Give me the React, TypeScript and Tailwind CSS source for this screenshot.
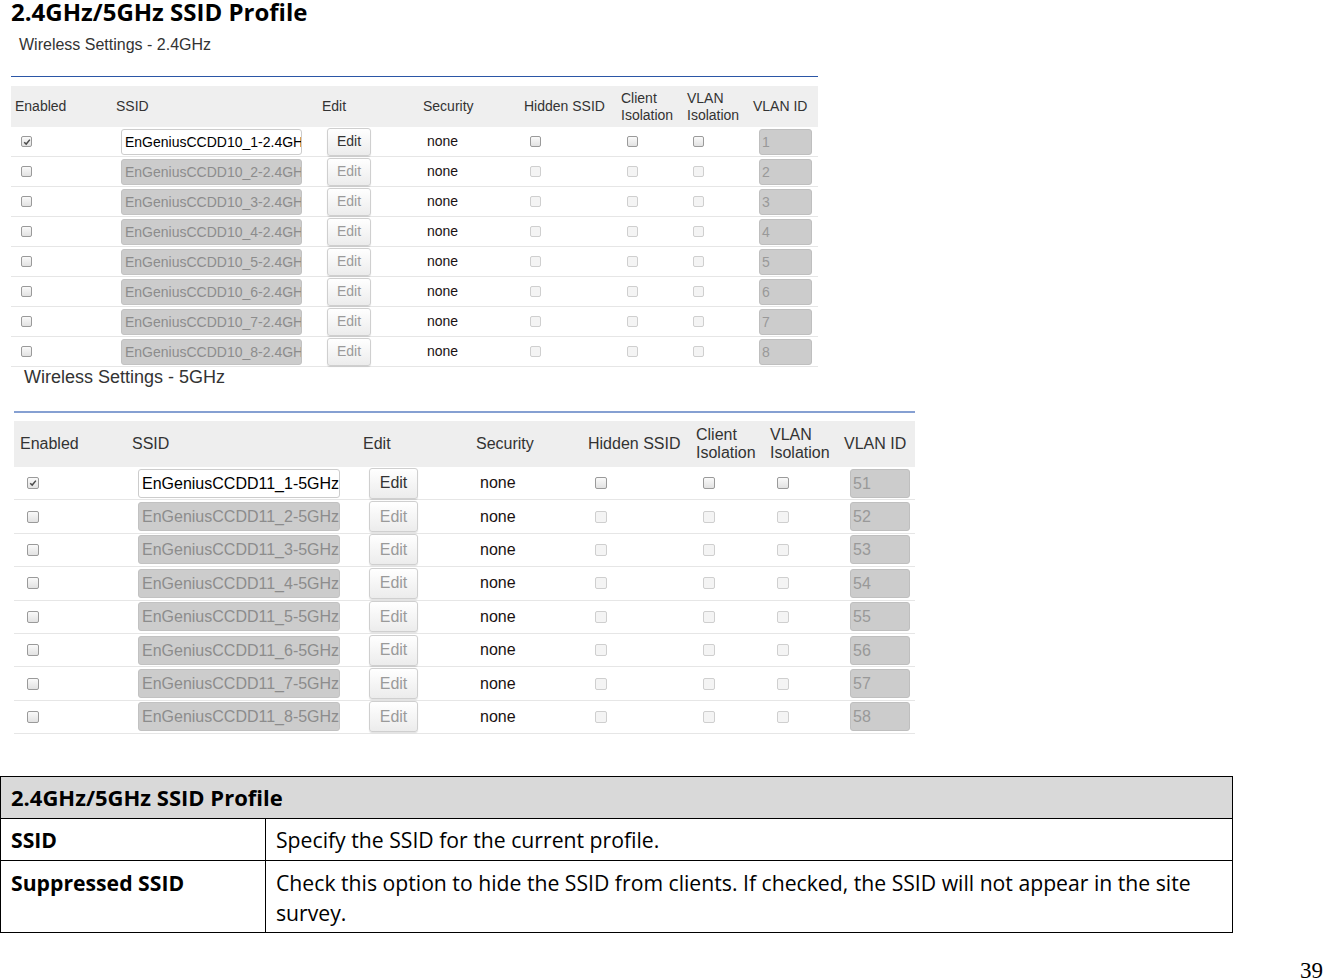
import React from 'react'

type Cfg = {
  wrap: string
  title: string
  line: string
  gap: string
  head: string
  row: string
  cols: string[]
  headPad: string[]
  cellPad: string[]
  cb: string
  input: string
  btn: string
  vlan: string
  prefix: string
  ids: number[]
  band: string
}

const small: Cfg = {
  wrap: 'ml-[11px] w-[807px]',
  title: 'pl-[8px] mt-[10px] text-[16px] leading-[18px] h-[18px]',
  line: 'mt-[22px] h-px bg-[#2b56a6]',
  gap: 'h-[9px]',
  head: 'h-[41px] bg-[#efefef] text-[14px] leading-[17px]',
  row: 'h-[30px] text-[14px]',
  cols: ['w-[100px]', 'w-[206px]', 'w-[96px]', 'w-[101px]', 'w-[102px]', 'w-[66px]', 'w-[66px]', 'w-[70px]'],
  headPad: ['pl-[4px]', 'pl-[5px]', 'pl-[5px]', 'pl-[10px]', 'pl-[10px]', 'pl-[5px]', 'pl-[5px]', 'pl-[5px]'],
  cellPad: ['pl-[10px]', 'pl-[10px]', 'pl-[10px]', 'pl-[14px]', 'pl-[16px]', 'pl-[11px]', 'pl-[11px]', 'pl-[11px]'],
  cb: 'size-[11px]',
  input: 'w-[181px] h-[26px] pl-[3px] text-[14px] leading-[24px]',
  btn: 'w-[44px] h-[28px] text-[14px]',
  vlan: 'w-[53px] h-[26px] pl-[2px] text-[14px] leading-[24px]',
  prefix: 'EnGeniusCCDD10_',
  ids: [1, 2, 3, 4, 5, 6, 7, 8],
  band: '2.4GHz',
}

const large: Cfg = {
  wrap: 'ml-[14px] w-[901px]',
  title: 'pl-[10px] text-[18px] leading-[20px] h-[20px]',
  line: 'mt-[24px] h-[2px] bg-[#86a0d2]',
  gap: 'h-[8px]',
  head: 'h-[46px] bg-[#eeeeee] text-[16px] leading-[18px]',
  row: 'h-[33.4px] text-[16px]',
  cols: ['w-[112px]', 'w-[230px]', 'w-[107px]', 'w-[113px]', 'w-[114px]', 'w-[74px]', 'w-[73px]', 'w-[78px]'],
  headPad: ['pl-[6px]', 'pl-[6px]', 'pl-[7px]', 'pl-[13px]', 'pl-[12px]', 'pl-[6px]', 'pl-[6px]', 'pl-[7px]'],
  cellPad: ['pl-[13px]', 'pl-[12px]', 'pl-[13px]', 'pl-[17px]', 'pl-[19px]', 'pl-[13px]', 'pl-[13px]', 'pl-[13px]'],
  cb: 'size-[12px]',
  input: 'w-[202px] h-[29px] pl-[3px] text-[16px] leading-[27px]',
  btn: 'w-[49px] h-[31px] text-[16px]',
  vlan: 'w-[60px] h-[29px] pl-[2px] text-[16px] leading-[27px]',
  prefix: 'EnGeniusCCDD11_',
  ids: [51, 52, 53, 54, 55, 56, 57, 58],
  band: '5GHz',
}

function Check({ cfg, on, checked }: { cfg: Cfg; on: boolean; checked?: boolean }) {
  return (
    <div
      className={`${cfg.cb} rounded-[2px] border flex items-center justify-center ${
        on ? 'border-[#9a9a9a] bg-gradient-to-b from-[#fafafa] to-[#e2e2e2]' : 'border-[#cfcfcf] bg-[#f4f4f4]'
      }`}
    >
      {checked && (
        <svg viewBox="0 0 10 10" className="size-[8px]">
          <path d="M1.5 5.2 L4 7.6 L8.6 2" fill="none" stroke="#4a4a4a" strokeWidth="1.8" />
        </svg>
      )}
    </div>
  )
}

const headers: React.ReactNode[] = [
  'Enabled',
  'SSID',
  'Edit',
  'Security',
  'Hidden SSID',
  <>Client<br />Isolation</>,
  <>VLAN<br />Isolation</>,
  'VLAN ID',
]

function SsidTable({ cfg, title }: { cfg: Cfg; title: string }) {
  return (
    <div className={`${cfg.wrap} text-[#222] font-['Liberation_Sans',Arial,sans-serif]`}>
      <div className={`${cfg.title} text-[#333]`}>{title}</div>
      <div className={cfg.line} />
      <div className={cfg.gap} />
      <div className={`flex items-center ${cfg.head} text-[#333]`}>
        {headers.map((h, i) => (
          <div key={i} className={`${cfg.cols[i]} ${cfg.headPad[i]} shrink-0`}>
            {h}
          </div>
        ))}
      </div>
      {cfg.ids.map((id, r) => {
        const on = r === 0
        return (
          <div key={id} className={`flex items-center border-b border-[#e6e6e6] ${cfg.row}`}>
            <div className={`${cfg.cols[0]} ${cfg.cellPad[0]} shrink-0`}>
              <Check cfg={cfg} on checked={on} />
            </div>
            <div className={`${cfg.cols[1]} ${cfg.cellPad[1]} shrink-0`}>
              <div
                className={`${cfg.input} rounded-[3px] border overflow-hidden whitespace-nowrap ${
                  on ? 'bg-white border-[#cccccc] text-black' : 'bg-[#cccccc] border-[#c2c2c2] text-[#8c8c8c]'
                }`}
              >
                {`${cfg.prefix}${r + 1}-${cfg.band}`}
              </div>
            </div>
            <div className={`${cfg.cols[2]} ${cfg.cellPad[2]} shrink-0`}>
              <div
                className={`${cfg.btn} rounded-[3px] border border-[#cfcfcf] bg-gradient-to-b from-white to-[#ececec] shadow-[0_1px_1px_rgba(0,0,0,0.12)] flex items-center justify-center ${
                  on ? 'text-[#333]' : 'text-[#9a9a9a]'
                }`}
              >
                Edit
              </div>
            </div>
            <div className={`${cfg.cols[3]} ${cfg.cellPad[3]} shrink-0 text-[#1a1111]`}>none</div>
            <div className={`${cfg.cols[4]} ${cfg.cellPad[4]} shrink-0`}>
              <Check cfg={cfg} on={on} />
            </div>
            <div className={`${cfg.cols[5]} ${cfg.cellPad[5]} shrink-0`}>
              <Check cfg={cfg} on={on} />
            </div>
            <div className={`${cfg.cols[6]} ${cfg.cellPad[6]} shrink-0`}>
              <Check cfg={cfg} on={on} />
            </div>
            <div className={`${cfg.cols[7]} ${cfg.cellPad[7]} shrink-0`}>
              <div className={`${cfg.vlan} rounded-[3px] border border-[#bfbfbf] bg-[#cccccc] text-[#999]`}>{id}</div>
            </div>
          </div>
        )
      })}
    </div>
  )
}

export default function App() {
  return (
    <div className="w-[1323px] h-[980px] bg-white overflow-hidden text-black">
      <h1 className="pl-[11px] h-[26px] pt-[2px] text-[24px] leading-[20px] font-bold font-['Open_Sans','Noto_Sans',sans-serif]">
        2.4GHz/5GHz SSID Profile
      </h1>
      <SsidTable cfg={small} title="Wireless Settings - 2.4GHz" />
      <SsidTable cfg={large} title="Wireless Settings - 5GHz" />

      <div className="mt-[42px] w-[1233px] border border-black font-['Open_Sans','Noto_Sans',sans-serif] text-[21.2px]">
        <div className="h-[42px] bg-[#d9d9d9] border-b border-black pl-[10px] flex items-center font-bold text-[22px]">
          2.4GHz/5GHz SSID Profile
        </div>
        <div className="grid grid-cols-[265px_1fr] border-b border-black">
          <div className="h-[41px] pl-[10px] flex items-center font-bold border-r border-black">SSID</div>
          <div className="pl-[10px] flex items-center">Specify the SSID for the current profile.</div>
        </div>
        <div className="grid grid-cols-[265px_1fr]">
          <div className="pl-[10px] pt-[7px] font-bold border-r border-black leading-[30px]">Suppressed SSID</div>
          <div className="pl-[10px] pt-[7px] pb-[4px] pr-[20px] leading-[30px]">
            Check this option to hide the SSID from clients. If checked, the SSID will not appear in the site survey.
          </div>
        </div>
      </div>

      <div className="mt-[26px] flex justify-end font-['Liberation_Serif','Times_New_Roman',serif] text-[23px] leading-[23px]">
        39
      </div>
    </div>
  )
}
